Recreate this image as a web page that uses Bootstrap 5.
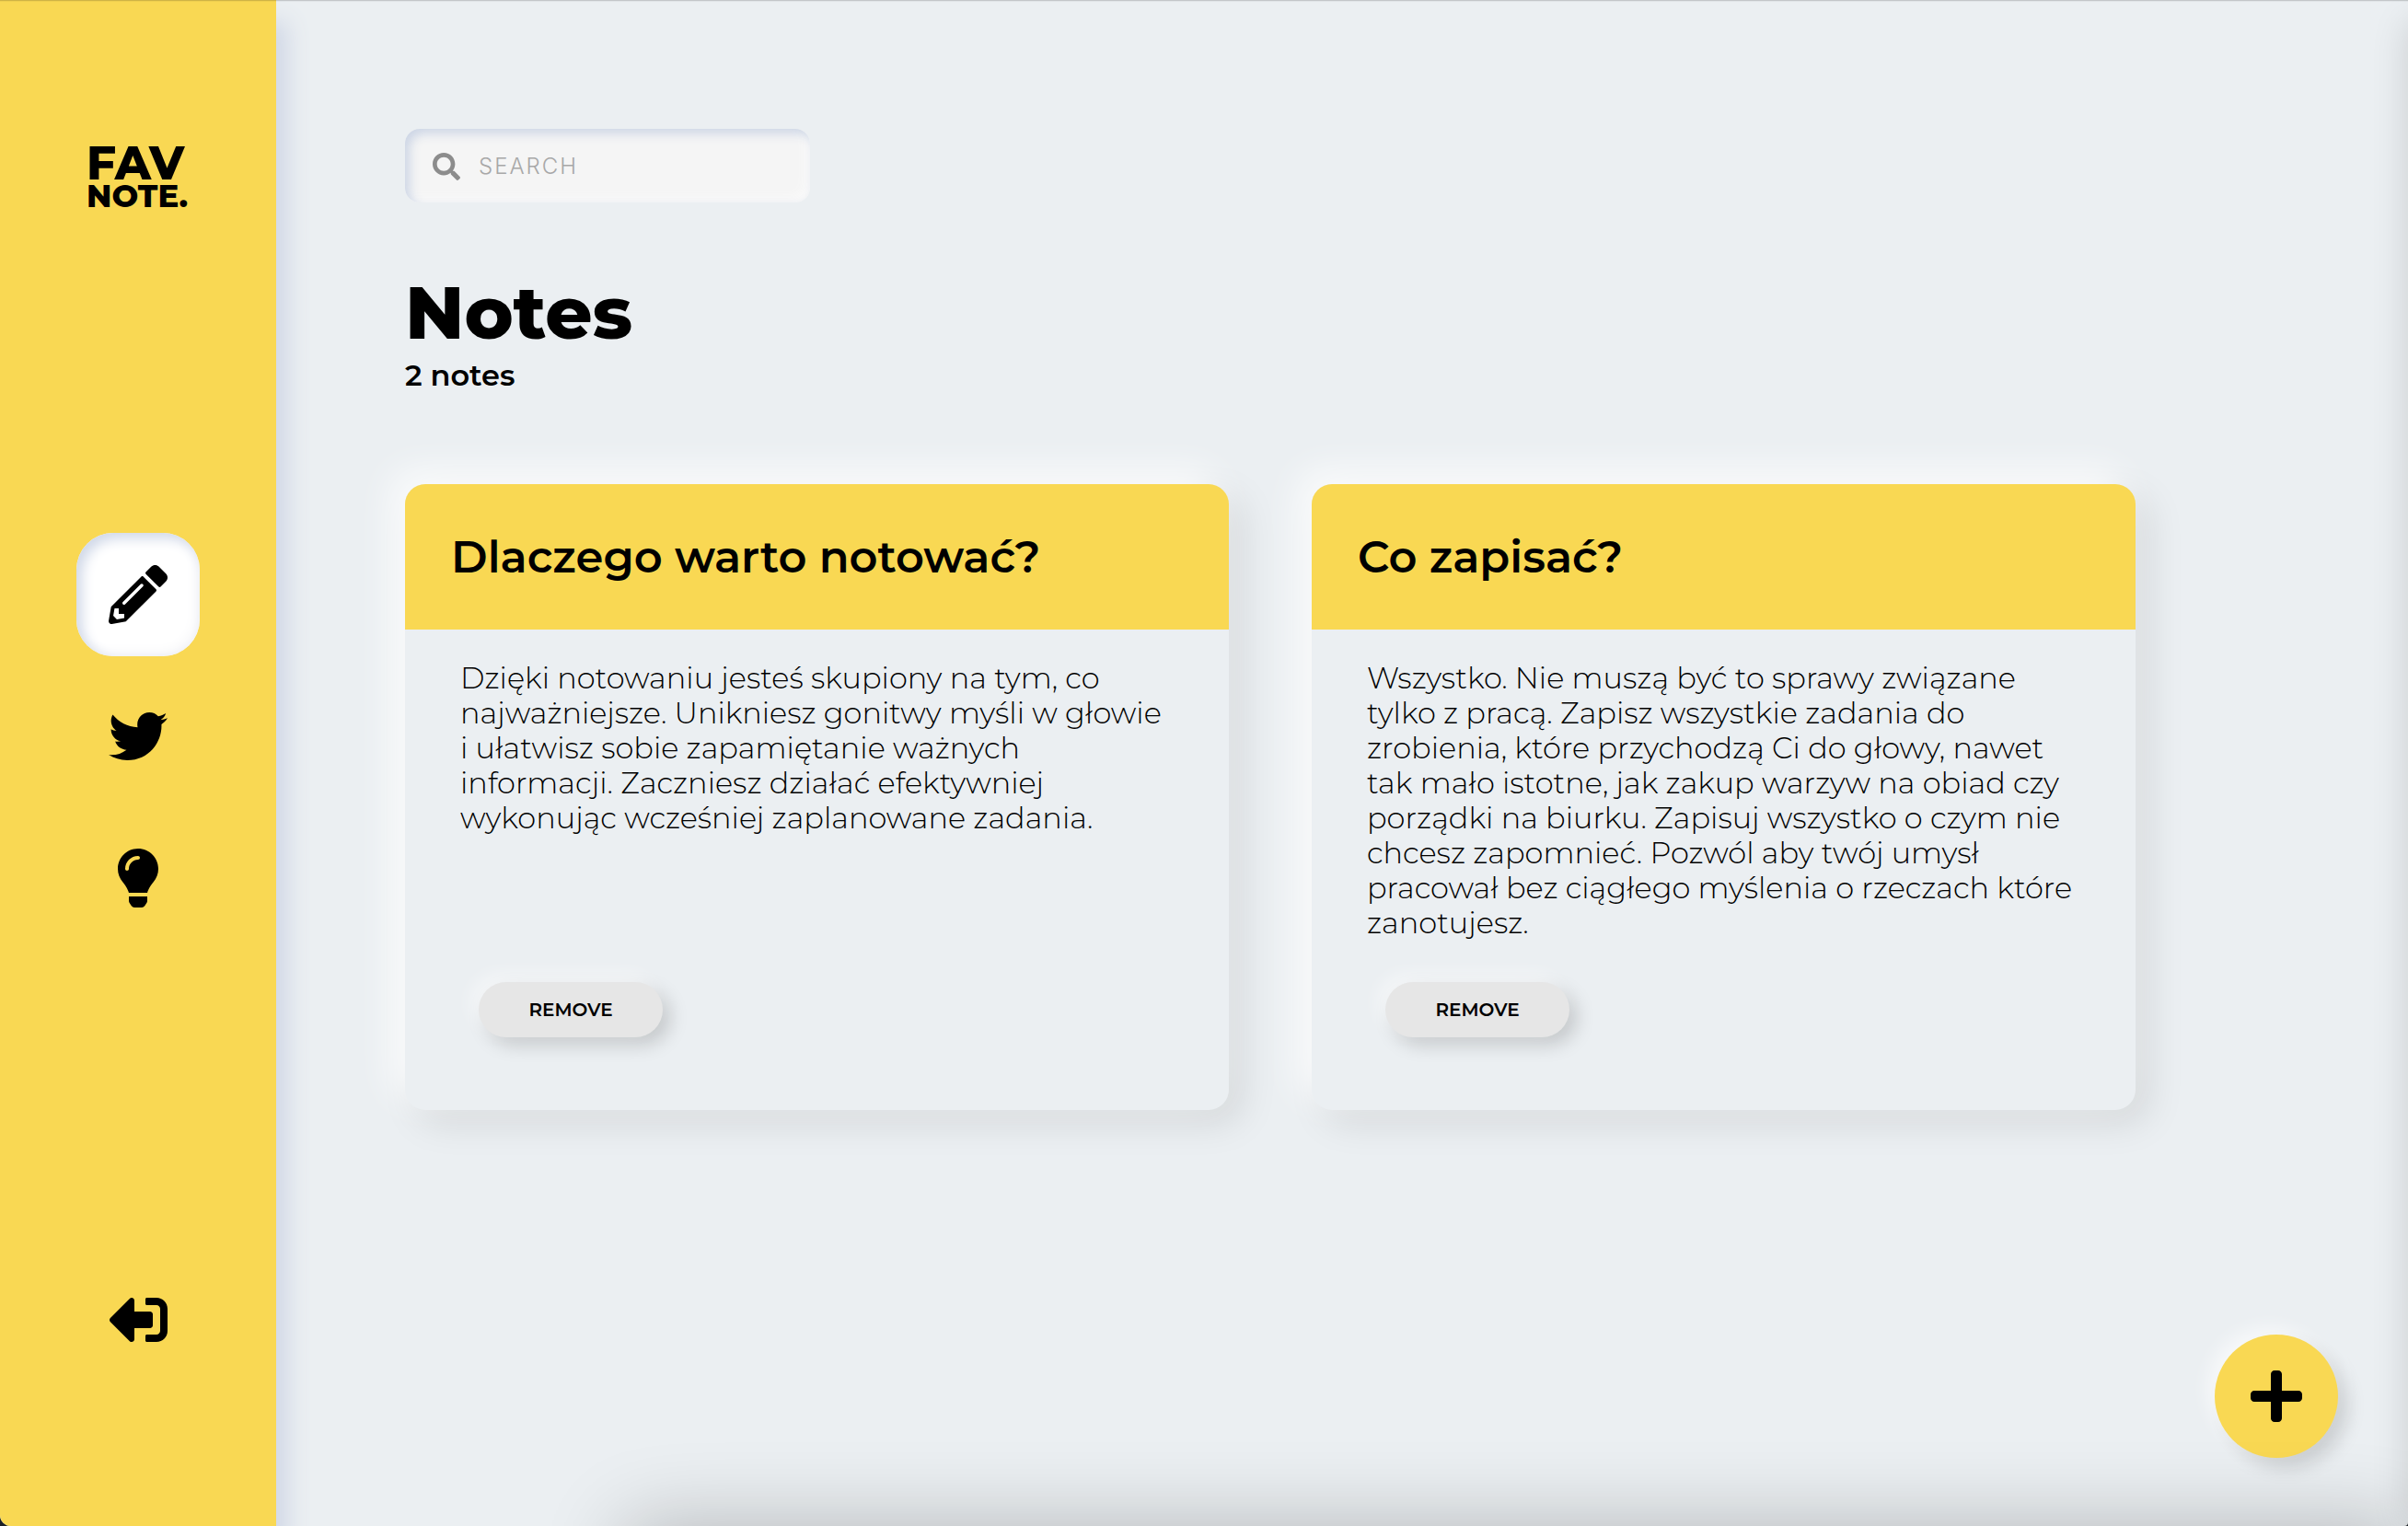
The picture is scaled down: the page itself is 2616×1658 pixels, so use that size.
<!DOCTYPE html>
<html lang="pl">
<head>
<meta charset="utf-8">
<meta name="viewport" content="width=device-width, initial-scale=1">
<title>Fav Note – Notes</title>
<link rel="stylesheet" href="https://cdn.jsdelivr.net/npm/bootstrap@5.3.0/dist/css/bootstrap.min.css">
<script defer src="https://cdn.jsdelivr.net/npm/bootstrap@5.3.0/dist/js/bootstrap.bundle.min.js"></script>
<style>
  :root { --note: #f9d853; --page: #ebeff2; }
  body { background: #1c2126; color: #000; font-family: Montserrat, Inter, "Open Sans", sans-serif; }
  .app { background: var(--page); border-radius: 0 0 4px 12px; }
  .app::before { content: ""; position: absolute; inset: 0 0 auto; height: 2px; z-index: 5;
    background: linear-gradient(rgba(0,0,0,.17) 50%, rgba(0,0,0,.04) 50%); }

  /* soft vignette along the right and bottom edges of the window */
  .edge-right, .edge-bottom { position: absolute; pointer-events: none; }
  .edge-right { left: 100%; top: 24px; bottom: 0; width: 100px; box-shadow: 0 0 40px rgba(0,0,0,.14); }
  .edge-bottom { top: 100%; left: 680px; right: 0; height: 200px; box-shadow: 0 0 90px rgba(0,0,0,.24); }

  .sidebar { width: 300px; padding: 157px 0; background: var(--note); box-shadow: 12px 24px 24px #d0d7e6; }
  .logo { height: 76px; width: 112px; padding-top: 1px; color: #000; font-weight: 800; }
  .logo-top { font-size: 50px; line-height: 40px; }
  .logo-sub { font-size: 34px; line-height: 30px; }
  .tile { width: 134px; height: 134px; border-radius: 40px; color: #000; }
  .tile svg { height: 64px; fill: currentColor; }
  .tile.active { background: #fff; box-shadow: inset 6px 6px 14px #d0d8e8, inset -4px -4px 14px #f6f6f8; }

  .content { padding: 140px 296px 140px 140px; }
  .search { width: 440px; height: 80px; padding: 2px 30px 0; gap: 20px; border-radius: 16px; background: #f5f5f5;
    box-shadow: inset 5px 5px 12px #ccd5e5, inset -5px -5px 12px #fafafa; }
  .search svg { width: 30px; height: 30px; fill: #8c8c8c; }
  .search input { font-family: Inter, sans-serif; font-size: 24px; font-weight: 300; letter-spacing: 2px; outline: 0; }
  .search input::placeholder { color: #a8a8a8; opacity: 1; }

  .page-title { font-size: 80px; line-height: 98px; font-weight: 800; margin-top: 71px; }
  .page-count { font-size: 32px; line-height: 38px; font-weight: 600; margin: 0; }

  .notes { --bs-gutter-x: 90px; --bs-gutter-y: 90px; margin-top: 9px; }
  .note { min-height: 680px; border-radius: 22px; background: var(--page);
    box-shadow: -14px -14px 40px rgba(255,255,255,.85), 14px 14px 40px rgba(0,0,0,.1); }
  .note-head { padding: 49px 50px; background: var(--note); border-radius: 22px 22px 0 0; }
  .note-head h2 { font-size: 48px; line-height: 60px; font-weight: 600; }
  .note-body { padding: 34px 60px 79px; }
  .note-text { font-size: 32px; line-height: 38px; font-weight: 300; }
  .note-remove { width: 200px; height: 60px; margin-left: 20px; border: 0; border-radius: 30px; background: #e6e6e6;
    font-size: 20px; font-weight: 600; color: #000;
    box-shadow: -8px -8px 20px rgba(255,255,255,.5), 8px 8px 20px rgba(0,0,0,.17); }

  .fab { right: 76px; bottom: 74px; width: 134px; height: 134px; border: 0; background: var(--note);
    box-shadow: -8px -8px 20px rgba(255,255,255,.6), 10px 10px 20px rgba(0,0,0,.15); }
  .fab svg { width: 56px; height: 64px; }
</style>
</head>
<body>
<div class="app d-flex min-vh-100 position-relative overflow-hidden">
  <aside class="sidebar flex-shrink-0 d-flex flex-column align-items-center justify-content-between">
    <a href="#" class="logo d-block text-decoration-none">
      <span class="logo-top d-block">FAV</span>
      <span class="logo-sub d-block">NOTE.</span>
    </a>
    <nav class="d-flex flex-column" style="gap:20px" aria-label="Main">
      <a href="#" class="tile active d-flex align-items-center justify-content-center" aria-label="Notes" aria-current="page">
        <svg viewBox="0 0 512 512"><path d="M497.9 142.1l-46.1 46.1c-4.7 4.7-12.3 4.7-17 0l-111-111c-4.7-4.7-4.7-12.3 0-17l46.1-46.1c18.7-18.7 49.1-18.7 67.9 0l60.1 60.1c18.8 18.7 18.8 49.1 0 67.9zM284.2 99.8L21.6 362.4.4 483.9c-2.9 16.4 11.4 30.6 27.8 27.8l121.5-21.3 262.6-262.6c4.7-4.7 4.7-12.3 0-17l-111-111c-4.8-4.7-12.4-4.7-17.1 0zM124.1 339.9c-5.5-5.5-5.5-14.3 0-19.8l154-154c5.5-5.5 14.3-5.5 19.8 0s5.5 14.3 0 19.8l-154 154c-5.5 5.5-14.3 5.5-19.8 0zM88 424h48v36.3l-64.5 11.3-31.1-31.1L51.7 376H88v48z"/></svg>
      </a>
      <a href="#" class="tile d-flex align-items-center justify-content-center" aria-label="Twitters">
        <svg viewBox="0 0 512 512"><path d="M459.37 151.716c.325 4.548.325 9.097.325 13.645 0 138.72-105.583 298.558-298.558 298.558-59.452 0-114.68-17.219-161.137-47.106 8.447.974 16.568 1.299 25.34 1.299 49.055 0 94.213-16.568 130.274-44.832-46.132-.975-84.792-31.188-98.112-72.772 6.498.974 12.995 1.624 19.818 1.624 9.421 0 18.843-1.3 27.614-3.573-48.081-9.747-84.143-51.98-84.143-102.985v-1.299c13.969 7.797 30.214 12.67 47.431 13.319-28.264-18.843-46.781-51.005-46.781-87.391 0-19.492 5.197-37.36 14.294-52.954 51.655 63.675 129.3 105.258 216.365 109.807-1.624-7.797-2.599-15.918-2.599-24.04 0-57.828 46.782-104.934 104.934-104.934 30.213 0 57.502 12.67 76.67 33.137 23.715-4.548 46.456-13.32 66.599-25.34-7.798 24.366-24.366 44.833-46.132 57.827 21.117-2.273 41.584-8.122 60.426-16.243-14.292 20.791-32.161 39.308-52.628 54.253z"/></svg>
      </a>
      <a href="#" class="tile d-flex align-items-center justify-content-center" aria-label="Ideas">
        <svg viewBox="0 0 352 512"><path d="M96.06 454.35c.01 6.29 1.87 12.45 5.36 17.69l17.09 25.69a31.99 31.99 0 0 0 26.64 14.28h61.71a31.99 31.99 0 0 0 26.64-14.28l17.09-25.69a31.989 31.989 0 0 0 5.36-17.69l.04-38.35H96.01l.05 38.35zM0 176c0 44.37 16.45 84.85 43.56 115.78 16.52 18.85 42.36 58.23 52.21 91.45.04.26.07.52.11.78h160.24c.04-.26.07-.51.11-.78 9.85-33.22 35.69-72.6 52.21-91.45C335.55 260.85 352 220.37 352 176 352 78.61 272.91-.3 175.45 0 73.44.31 0 82.97 0 176zm176-80c-44.11 0-80 35.89-80 80 0 8.84-7.16 16-16 16s-16-7.16-16-16c0-61.76 50.24-112 112-112 8.84 0 16 7.16 16 16s-7.16 16-16 16z"/></svg>
      </a>
    </nav>
    <a href="#" class="tile d-flex align-items-center justify-content-center" aria-label="Log out">
      <svg viewBox="0 0 512 512"><path transform="rotate(180 256 256)" d="M497 273L329 441c-15 15-41 4.5-41-17v-96H152c-13.3 0-24-10.7-24-24v-96c0-13.3 10.7-24 24-24h136V88c0-21.4 25.9-32 41-17l168 168c9.3 9.4 9.3 24.6 0 34zM192 436v-40c0-6.6-5.4-12-12-12H96c-17.7 0-32-14.3-32-32V160c0-17.7 14.3-32 32-32h84c6.6 0 12-5.4 12-12V76c0-6.6-5.4-12-12-12H96c-53 0-96 43-96 96v192c0 53 43 96 96 96h84c6.6 0 12-5.4 12-12z"/></svg>
    </a>
  </aside>

  <main class="content flex-grow-1">
    <label class="search d-flex align-items-center">
      <svg viewBox="0 0 512 512" class="flex-shrink-0" aria-hidden="true"><path d="M505 442.7L405.3 343c-4.5-4.5-10.6-7-17-7H372c27.6-35.3 44-79.7 44-128C416 93.1 322.9 0 208 0S0 93.1 0 208s93.1 208 208 208c48.3 0 92.7-16.4 128-44v16.3c0 6.4 2.5 12.5 7 17l99.7 99.7c9.4 9.4 24.6 9.4 33.9 0l28.3-28.3c9.4-9.4 9.4-24.6.1-34zM208 336c-70.7 0-128-57.2-128-128 0-70.7 57.2-128 128-128 70.7 0 128 57.2 128 128 0 70.7-57.2 128-128 128z"/></svg>
      <input type="search" class="w-100 border-0 bg-transparent p-0" placeholder="SEARCH" aria-label="Search">
    </label>
    <h1 class="page-title mb-0">Notes</h1>
    <p class="page-count">2 notes</p>

    <div class="notes row row-cols-2">
      <div class="col">
        <article class="note d-flex flex-column h-100">
          <header class="note-head"><h2 class="m-0">Dlaczego warto notować?</h2></header>
          <div class="note-body flex-grow-1 d-flex flex-column align-items-start justify-content-between">
            <p class="note-text m-0">Dzięki notowaniu jesteś skupiony na tym, co najważniejsze. Unikniesz gonitwy myśli w głowie i&nbsp;ułatwisz sobie zapamiętanie ważnych informacji. Zaczniesz działać efektywniej wykonując wcześniej zaplanowane zadania.</p>
            <button type="button" class="note-remove">REMOVE</button>
          </div>
        </article>
      </div>
      <div class="col">
        <article class="note d-flex flex-column h-100">
          <header class="note-head"><h2 class="m-0">Co zapisać?</h2></header>
          <div class="note-body flex-grow-1 d-flex flex-column align-items-start justify-content-between">
            <p class="note-text m-0">Wszystko. Nie muszą być to sprawy związane tylko z pracą. Zapisz wszystkie zadania do zrobienia, które przychodzą Ci do głowy, nawet tak mało istotne, jak zakup warzyw na obiad czy porządki na biurku. Zapisuj wszystko o czym nie chcesz zapomnieć. Pozwól aby twój umysł pracował bez ciągłego myślenia o rzeczach które zanotujesz.</p>
            <button type="button" class="note-remove">REMOVE</button>
          </div>
        </article>
      </div>
    </div>
  </main>

  <button type="button" class="fab rounded-circle position-fixed d-flex align-items-center justify-content-center" aria-label="Add note">
    <svg viewBox="0 0 448 512"><path d="M416 208H272V64c0-17.67-14.33-32-32-32h-32c-17.67 0-32 14.33-32 32v144H32c-17.67 0-32 14.33-32 32v32c0 17.67 14.33 32 32 32h144v144c0 17.67 14.33 32 32 32h32c17.67 0 32-14.33 32-32V304h144c17.67 0 32-14.33 32-32v-32c0-17.67-14.33-32-32-32z"/></svg>
  </button>
  <div class="edge-right"></div>
  <div class="edge-bottom"></div>
</div>
</body>
</html>
